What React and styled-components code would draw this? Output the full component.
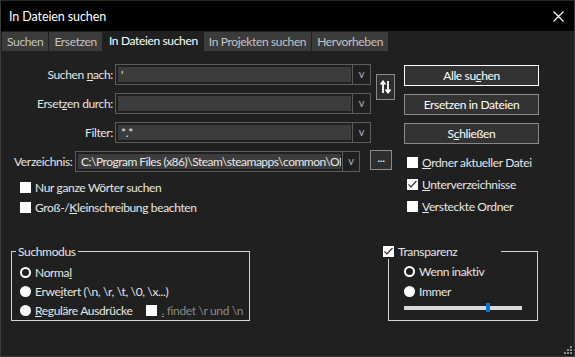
import styled, { createGlobalStyle } from "styled-components"

const Global = createGlobalStyle`
  body { margin: 0; background: #202020; }
`

const Fenster = styled.div`
  position: relative;
  width: 575px;
  height: 357px;
  box-sizing: border-box;
  border: 1px solid #3a3a3a;
  border-top-color: #2c2c2c;
  background: #202020;
  font-family: Lato, "Noto Sans", sans-serif;
  font-size: 12px;
  letter-spacing: -0.35px;
  color: #e6e6e6;
  display: flex;
  flex-direction: column;
  overflow: hidden;
`

const TitelLeiste = styled.div`
  height: 30px;
  flex: none;
  background: #000;
  color: #fff;
  font-size: 12.5px;
  letter-spacing: -0.1px;
  display: flex;
  align-items: center;
  justify-content: space-between;
  padding: 0 10px 0 8px;
`

const TabLeiste = styled.div`
  height: 21px;
  flex: none;
  display: flex;
  align-items: flex-end;
  gap: 1px;
  padding-left: 1px;
`

const Tab = styled.div`
  height: ${p => (p.$aktiv ? "21px" : "19px")};
  margin: ${p => (p.$aktiv ? "0 0 0 1px" : "0 0 1px")};
  box-sizing: border-box;
  padding: ${p => (p.$aktiv ? "0 5px 2px" : "0 5px")};
  display: flex;
  align-items: center;
  background: ${p => (p.$aktiv ? "#202020" : "#3b3b3b")};
  color: ${p => (p.$aktiv ? "#ffffff" : "#c4c4c4")};
`

const Inhalt = styled.div`
  padding-top: 12px;
  display: flex;
  flex-direction: column;
`

const OberBereich = styled.div`
  display: flex;
`

const LinkerTeil = styled.div`
  width: 403px;
  display: flex;
  flex-direction: column;
`

const FelderBlock = styled.div`
  display: flex;
`

const FelderSpalte = styled.div`
  display: flex;
  flex-direction: column;
  gap: 8px;
`

const Zeile = styled.div`
  display: flex;
  align-items: center;
  height: 21px;
`

const Beschriftung = styled.label`
  width: 112px;
  margin-right: 2px;
  text-align: right;
  white-space: nowrap;
`

const VerzBeschriftung = styled.label`
  width: 74px;
  box-sizing: border-box;
  padding-left: 13px;
  white-space: nowrap;
`

const Combo = styled.div`
  width: ${p => p.$breite}px;
  height: 21px;
  box-sizing: border-box;
  border: 1px solid #5c5c5c;
  display: flex;
`

const Feld = styled.div`
  flex: 1;
  min-width: 0;
  margin: 2px 1px 2px 2px;
  background: #3c3c3c;
  color: #e8e8e8;
  padding-left: 3px;
  line-height: 15px;
  white-space: nowrap;
  overflow: hidden;
  letter-spacing: ${p => (p.$eng ? "-0.5px" : "inherit")};
`

const Pfeil = styled.div`
  width: ${p => p.$breite}px;
  flex: none;
  border-left: 1px solid #5c5c5c;
  display: flex;
  align-items: center;
  justify-content: center;
  color: #a8b0c4;
  font-size: 11px;
  padding-bottom: 2px;
  box-sizing: border-box;
`

const TauschKnopf = styled.div`
  width: 19px;
  height: 26px;
  box-sizing: border-box;
  margin: 10px 0 0 5px;
  border: 1px solid #8a8a8a;
  background: #2e2e2e;
  display: flex;
  align-items: center;
  justify-content: center;
`

const VerzZeile = styled(Zeile)`
  margin-top: 8px;
`

const PunkteKnopf = styled.div`
  width: 22px;
  height: 20px;
  box-sizing: border-box;
  margin: -4px 0 0 10px;
  border: 1px solid #8a8a8a;
  background: #2e2e2e;
  color: #fff;
  display: flex;
  align-items: center;
  justify-content: center;
  padding-bottom: 4px;
`

const OptionenLinks = styled.div`
  margin-top: 5px;
  padding-left: 19px;
  display: flex;
  flex-direction: column;
`

const Option = styled.div`
  height: ${p => p.$hoehe || 20}px;
  display: flex;
  align-items: center;
  gap: 4px;
  white-space: nowrap;
  color: ${p => (p.$grau ? "#8a8a8a" : "inherit")};
`

const Kasten = styled.div`
  width: 11px;
  height: 11px;
  flex: none;
  margin-left: ${p => p.$abstand || 0}px;
  background: #ffffff;
  display: flex;
  align-items: center;
  justify-content: center;
`

const RechterTeil = styled.div`
  width: 135px;
  padding-top: 1px;
  display: flex;
  flex-direction: column;
`

const KnopfSpalte = styled.div`
  display: flex;
  flex-direction: column;
  gap: 8px;
`

const Knopf = styled.div`
  height: 21px;
  box-sizing: border-box;
  border: 1px solid ${p => (p.$standard ? "#ffffff" : "#8a8a8a")};
  background: #333333;
  color: #fff;
  display: flex;
  align-items: center;
  justify-content: center;
  padding-bottom: 1px;
`

const OptionenRechts = styled.div`
  margin-top: 7px;
  padding-left: 3px;
  display: flex;
  flex-direction: column;
`

const UnterBereich = styled.div`
  margin-top: 34px;
  display: flex;
`

const Gruppe = styled.div`
  position: relative;
  width: ${p => p.$breite}px;
  height: 70px;
  margin-left: ${p => p.$abstand}px;
  box-sizing: border-box;
  border: 1px solid #d4d4d4;
  padding: ${p => p.$innen};
  display: flex;
  flex-direction: column;
`

const Titel = styled.div`
  position: absolute;
  top: -8px;
  left: ${p => p.$links}px;
  width: ${p => (p.$breite ? p.$breite + "px" : "auto")};
  height: 15px;
  padding: 0 2px;
  background: #202020;
  display: flex;
  align-items: center;
  gap: 4px;
  white-space: nowrap;
`

const Radio = styled.div`
  width: 11px;
  height: 11px;
  box-sizing: border-box;
  flex: none;
  border-radius: 50%;
  background: ${p => (p.$an ? "#202020" : "#ffffff")};
  border: ${p => (p.$an ? "2.5px solid #ffffff" : "none")};
`

const Regler = styled.div`
  position: relative;
  width: 118px;
  height: 4px;
  margin-top: 5px;
  background: #d8d8d8;
`

const Schieber = styled.div`
  position: absolute;
  left: 82px;
  top: -3px;
  width: 4px;
  height: 9px;
  background: #0078d7;
`

const Griff = styled.svg`
  position: absolute;
  right: 2px;
  bottom: 2px;
`

const Haken = () => (
  <svg width="11" height="11" viewBox="0 0 11 11">
    <polyline points="1.5,5.5 4,8 9.5,2" fill="none" stroke="#333" strokeWidth="1.2" />
  </svg>
)

const Kombi = ({ breite, pfeil = 18, eng, children }) => (
  <Combo $breite={breite}>
    <Feld $eng={eng}>{children}</Feld>
    <Pfeil $breite={pfeil}>v</Pfeil>
  </Combo>
)

export default function App() {
  return (
    <>
      <Global />
      <Fenster>
        <TitelLeiste>
          <span>In Dateien suchen</span>
          <svg width="11" height="11" viewBox="0 0 11 11">
            <path d="M0.5 0.5 L10.5 10.5 M10.5 0.5 L0.5 10.5" stroke="#fff" strokeWidth="1.1" />
          </svg>
        </TitelLeiste>
        <TabLeiste>
          <Tab>Suchen</Tab>
          <Tab>Ersetzen</Tab>
          <Tab $aktiv>In Dateien suchen</Tab>
          <Tab>In Projekten suchen</Tab>
          <Tab>Hervorheben</Tab>
        </TabLeiste>
        <Inhalt>
          <OberBereich>
            <LinkerTeil>
              <FelderBlock>
                <FelderSpalte>
                  <Zeile>
                    <Beschriftung>Suchen <u>n</u>ach:</Beschriftung>
                    <Kombi breite={256}>'</Kombi>
                  </Zeile>
                  <Zeile>
                    <Beschriftung>Erset<u>z</u>en durch:</Beschriftung>
                    <Kombi breite={256} />
                  </Zeile>
                  <Zeile>
                    <Beschriftung>Filter:</Beschriftung>
                    <Kombi breite={256}>*.*</Kombi>
                  </Zeile>
                </FelderSpalte>
                <TauschKnopf>
                  <svg width="11" height="14" viewBox="0 0 11 14">
                    <path d="M3 13 V2 M0.5 4.5 L3 1.5 L5.5 4.5" fill="none" stroke="#fff" strokeWidth="1.8" />
                    <path d="M8 1 V12 M5.5 9.5 L8 12.5 L10.5 9.5" fill="none" stroke="#fff" strokeWidth="1.8" />
                  </svg>
                </TauschKnopf>
              </FelderBlock>
              <VerzZeile>
                <VerzBeschriftung>Verzeichnis:</VerzBeschriftung>
                <Kombi breite={285} pfeil={17} eng>C:\Program Files (x86)\Steam\steamapps\common\OM</Kombi>
                <PunkteKnopf>...</PunkteKnopf>
              </VerzZeile>
              <OptionenLinks>
                <Option>
                  <Kasten />
                  <span>Nur <u>g</u>anze Wörter suchen</span>
                </Option>
                <Option>
                  <Kasten />
                  <span>Groß-/<u>K</u>leinschreibung beachten</span>
                </Option>
              </OptionenLinks>
            </LinkerTeil>
            <RechterTeil>
              <KnopfSpalte>
                <Knopf $standard>Alle su<u>c</u>hen</Knopf>
                <Knopf>Ersetzen in Dateien</Knopf>
                <Knopf>S<u>c</u>hließen</Knopf>
              </KnopfSpalte>
              <OptionenRechts>
                <Option $hoehe={22}>
                  <Kasten />
                  <span><u>O</u>rdner aktueller Datei</span>
                </Option>
                <Option $hoehe={22}>
                  <Kasten><Haken /></Kasten>
                  <span><u>U</u>nterverzeichnisse</span>
                </Option>
                <Option $hoehe={22}>
                  <Kasten />
                  <span><u>V</u>ersteckte Ordner</span>
                </Option>
              </OptionenRechts>
            </RechterTeil>
          </OberBereich>
          <UnterBereich>
            <Gruppe $breite={239} $abstand={10} $innen="11px 0 0 8px">
              <Titel $links={4}>Suchmodus</Titel>
              <Option $hoehe={19}>
                <Radio $an />
                <span>Norma<u>l</u></span>
              </Option>
              <Option $hoehe={19}>
                <Radio />
                <span>Erwe<u>i</u>tert (\n, \r, \t, \0, \x...)</span>
              </Option>
              <Option $hoehe={19}>
                <Radio />
                <span><u>R</u>eguläre Ausdrücke</span>
                <Kasten $abstand={10} />
                <Option $grau><span><u>.</u> findet \r und \n</span></Option>
              </Option>
            </Gruppe>
            <Gruppe $breite={150} $abstand={138} $innen="9px 0 0 15px">
              <Titel $links={-8} $breite={116}>
                <Kasten><Haken /></Kasten>
                <span>Transparenz</span>
              </Titel>
              <Option>
                <Radio $an />
                <span>Wenn inaktiv</span>
              </Option>
              <Option>
                <Radio />
                <span>Immer</span>
              </Option>
              <Regler>
                <Schieber />
              </Regler>
            </Gruppe>
          </UnterBereich>
        </Inhalt>
        <Griff width="9" height="9" viewBox="0 0 9 9">
          <g fill="#8a8a8a">
            <rect x="7" y="1" width="2" height="2" />
            <rect x="4" y="4" width="2" height="2" />
            <rect x="7" y="4" width="2" height="2" />
            <rect x="1" y="7" width="2" height="2" />
            <rect x="4" y="7" width="2" height="2" />
            <rect x="7" y="7" width="2" height="2" />
          </g>
        </Griff>
      </Fenster>
    </>
  )
}
